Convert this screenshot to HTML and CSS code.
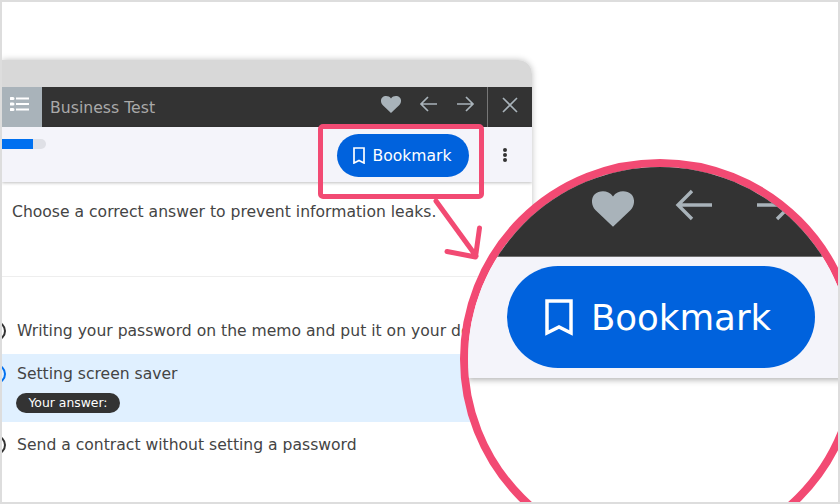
FILE: index.html
```html
<!DOCTYPE html>
<html lang="en">
<head>
  <meta charset="UTF-8">
  <meta name="viewport" content="width=device-width, initial-scale=1.0">
  <title>Bookmark</title>
  <link rel="stylesheet" href="styles.css">
</head>
<body>
  <div class="frame">
    <div class="window">
      <div class="window-top"></div>
      <div class="header">
        <div class="list-btn">
          <svg width="20" height="16" viewBox="0 0 20 16" fill="none" stroke="#fff" stroke-width="2">
            <path d="M6 2.500h13M6 8h13M6 13.500h13"/>
            <path d="M1 2.500h2M1 8h2M1 13.500h2" stroke-width="3" stroke-linecap="round"/>
          </svg>
        </div>
        <div class="title">Business Test</div>
        <div class="header-icons">
          <svg class="heart" width="20" height="17" viewBox="0 0 20 17"><path d="M10 17 1.600 9C-.6 6.700-.4 3 1.300 1.500 3.500-.5 7.800-.6 10 2.500 12.200-.6 16.500-.5 18.700 1.500c1.700 1.500 1.900 5.200-.3 7.500z" fill="#a9b3ba"/></svg>
          <svg class="arrow-icon" width="19" height="16" viewBox="0 0 19 16" fill="none" stroke="#a9b3ba" stroke-width="1.700"><path d="M18 8H2M9 1 2 8l7 7"/></svg>
          <svg class="arrow-icon" width="19" height="16" viewBox="0 0 19 16" fill="none" stroke="#a9b3ba" stroke-width="1.700"><path d="M1 8h16M10 1l7 7-7 7"/></svg>
        </div>
        <div class="close-btn">
          <svg width="16" height="16" viewBox="0 0 16 16" fill="none" stroke="#a9b3ba" stroke-width="1.600"><path d="m1 1 14 14M15 1 1 15"/></svg>
        </div>
      </div>
      <div class="toolbar">
        <div class="progress"><div class="progress-fill"></div></div>
        <button class="bookmark" type="button">
          <svg width="12" height="17" viewBox="0 0 12 17" fill="none" stroke="#fff" stroke-width="1.700"><path d="M1 1h10v15l-5-2.500L1 16z"/></svg>
          Bookmark
        </button>
        <div class="more"><span></span><span></span><span></span></div>
      </div>
      <p class="question">Choose a correct answer to prevent information leaks.</p>
      <div class="answers">
        <div class="answer">
          <span class="radio"></span>
          <div>Writing your password on the memo and put it on your desk</div>
        </div>
        <div class="answer selected">
          <span class="radio"></span>
          <div>
            Setting screen saver
            <div class="tag">Your answer:</div>
          </div>
        </div>
        <div class="answer">
          <span class="radio"></span>
          <div>Send a contract without setting a password</div>
        </div>
      </div>
    </div>

    <!-- callout -->
    <div class="highlight"></div>
    <svg class="pointer" width="70" height="70" viewBox="0 0 70 70" fill="none" stroke="#f24a73" stroke-width="5" stroke-linecap="round" stroke-linejoin="round">
      <path d="M8 2 48 57M51.500 29 47.500 58 19 52.500"/>
    </svg>

    <div class="lens">
      <div class="lens-header">
        <svg class="lens-heart" width="42" height="36" viewBox="0 0 20 17"><path d="M10 17 1.600 9C-.6 6.700-.4 3 1.300 1.500 3.500-.5 7.800-.6 10 2.500 12.200-.6 16.500-.5 18.700 1.500c1.700 1.500 1.900 5.200-.3 7.500z" fill="#a9b3ba"/></svg>
        <svg class="lens-arrow" width="38" height="32" viewBox="0 0 19 16" fill="none" stroke="#a9b3ba" stroke-width="1.700"><path d="M19 8H2M9 1 2 8l7 7"/></svg>
        <svg class="lens-arrow" width="38" height="32" viewBox="0 0 19 16" fill="none" stroke="#a9b3ba" stroke-width="1.700"><path d="M0 8h17M10 1l7 7-7 7"/></svg>
      </div>
      <div class="lens-toolbar">
        <div class="lens-button">
          <svg width="28" height="37" viewBox="0 0 28 37" fill="none" stroke="#fff" stroke-width="3.500"><path d="M2 2h24v32l-12-6-12 6z"/></svg>
          Bookmark
        </div>
      </div>
    </div>
  </div>
</body>
</html>
```
FILE: styles.css
```css
* {
  box-sizing: border-box;
}

body {
  margin: 0;
  font-family: "DejaVu Sans", Verdana, sans-serif;
  background: #fff;
  color: #444;
}

.frame {
  position: relative;
  width: 840px;
  height: 504px;
  padding-top: 58px;
  border: 2px solid #ddd;
  background: #fff;
  overflow: hidden;
}

.window {
  width: 530px;
  height: 460px;
  border-radius: 0 14px 0 0;
  box-shadow: 0 0 6px rgba(0, 0, 0, 0.25);
  background: #fff;
  overflow: hidden;
}

.window-top {
  height: 27px;
  background: #d8d8d8;
}

.header {
  display: flex;
  align-items: stretch;
  height: 40px;
  background: #333;
}

.list-btn {
  display: flex;
  align-items: center;
  justify-content: center;
  width: 40px;
  background: #a9b3ba;
  padding: 0 5px 7px 0;
}

.title {
  flex: 1;
  padding: 11px 0 0 8px;
  font-size: 15.700px;
  color: #a9a9a9;
}

.header-icons {
  display: flex;
  align-items: center;
  gap: 18px;
  padding-right: 12px;
  padding-bottom: 6px;
}

.close-btn {
  display: flex;
  align-items: center;
  justify-content: center;
  width: 45px;
  border-left: 1px solid #777;
  padding-bottom: 4px;
}

.toolbar {
  display: flex;
  align-items: flex-start;
  height: 55px;
  padding: 7px 0 0;
  background: #f4f4fa;
  box-shadow: 0 1px 3px rgba(0, 0, 0, 0.25);
}

.progress {
  width: 44px;
  height: 10px;
  margin: 5px 291px 0 0;
  border-radius: 0 5px 5px 0;
  background: #dfe0e6;
}

.progress-fill {
  width: 31px;
  height: 10px;
  background: #0070f0;
}

.bookmark {
  display: flex;
  align-items: center;
  justify-content: center;
  gap: 8px;
  width: 132px;
  height: 43px;
  padding: 0 2px 0 0;
  border: none;
  border-radius: 22px;
  background: #0062dd;
  color: #fff;
  font-family: inherit;
  font-size: 15.600px;
}

.more {
  display: flex;
  flex-direction: column;
  gap: 1px;
  margin: 14px 0 0 34px;
}

.more span {
  width: 4px;
  height: 4px;
  border-radius: 50%;
  background: #333;
}

.question {
  height: 95px;
  margin: 0;
  padding: 20px 0 0 10px;
  border-bottom: 1px solid #eee;
  font-size: 15.600px;
  line-height: 20px;
}

.answers {
  padding-top: 31px;
}

.answer {
  display: flex;
  align-items: flex-start;
  gap: 11px;
  padding: 13px 0;
  font-size: 15.600px;
  line-height: 20px;
  white-space: nowrap;
}

.radio {
  flex: none;
  width: 20px;
  height: 20px;
  margin: 0 0 0 -16px;
  border: 2.500px solid #333;
  border-radius: 50%;
}

.selected {
  height: 68px;
  padding-top: 10px;
  background: #e0f0ff;
}

.selected .radio {
  border-color: #0070f0;
}

.tag {
  width: 104px;
  height: 20px;
  margin: 9px 0 0 -1px;
  border-radius: 10px;
  background: #333;
  color: #fff;
  font-size: 12.400px;
  line-height: 20px;
  text-align: center;
}

/* callout pieces lie over the screenshot */
.highlight {
  position: absolute;
  left: 316px;
  top: 122px;
  width: 166px;
  height: 75px;
  border: 5px solid #f24a73;
  border-radius: 5px;
}

.pointer {
  position: absolute;
  left: 426px;
  top: 197px;
}

.lens {
  position: absolute;
  left: 458px;
  top: 157px;
  width: 400px;
  height: 400px;
  border: 8px solid #f24a73;
  border-radius: 50%;
  background: #fff;
  overflow: hidden;
}

.lens-header {
  display: flex;
  align-items: center;
  height: 90px;
  padding: 0 0 14px 124px;
  background: #333;
  border-bottom: 1px solid #777;
}

.lens-heart {
  margin: 8px -2px 0 0;
}

.lens-arrow {
  margin-left: 42px;
}

.lens-arrow:last-child {
  margin-left: 45px;
}

.lens-toolbar {
  height: 121px;
  padding: 9px 0 0 39px;
  background: #f4f4fa;
  box-shadow: 0 2px 6px rgba(0, 0, 0, 0.3);
}

.lens-button {
  display: flex;
  align-items: center;
  justify-content: center;
  gap: 18px;
  width: 308px;
  height: 102px;
  padding-right: 6px;
  border-radius: 51px;
  background: #0062dd;
  color: #fff;
  font-size: 35.600px;
}
```
